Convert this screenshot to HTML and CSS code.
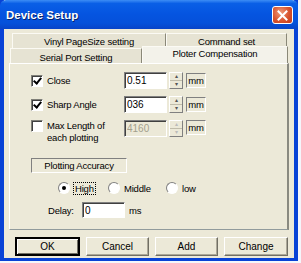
FILE: index.html
```html
<!DOCTYPE html>
<html lang="en">
<head>
  <meta charset="UTF-8" />
  <title>Device Setup</title>
  <link rel="stylesheet" href="styles.css">
</head>
<body>
  <div class="window">
    <!-- Barra de título -->
    <div class="titlebar">
      <span class="title">Device Setup</span>
      <button class="close-btn">
        <svg width="11" height="11" viewBox="0 0 11 11">
          <path d="M1.5 1.5 L9.5 9.5 M9.5 1.5 L1.5 9.5" stroke="#fff" stroke-width="2" stroke-linecap="square" />
        </svg>
      </button>
    </div>

    <div class="content">
      <!-- Pestañas (dos filas) -->
      <div class="tabs">
        <div class="tab-row back">
          <div class="tab tab-vinyl">Vinyl PageSize setting</div>
          <div class="tab tab-command">Command set</div>
        </div>
        <div class="tab-row front">
          <div class="tab tab-serial">Serial Port Setting</div>
          <div class="tab tab-ploter active">Ploter Compensation</div>
        </div>
      </div>

      <!-- Panel de la pestaña activa -->
      <div class="panel">
        <div class="field">
          <label class="check"><span class="box checked"></span><span>Close</span></label>
          <div class="spin">
            <input class="num" value="0.51">
            <div class="arrows"><span>&#9652;</span><span>&#9662;</span></div>
          </div>
          <span class="unit">mm</span>
        </div>

        <div class="field">
          <label class="check"><span class="box checked"></span><span>Sharp Angle</span></label>
          <div class="spin">
            <input class="num" value="036">
            <div class="arrows"><span>&#9652;</span><span>&#9662;</span></div>
          </div>
          <span class="unit">mm</span>
        </div>

        <div class="field tall">
          <label class="check top"><span class="box"></span><span>Max Length of<br>each plotting</span></label>
          <div class="spin disabled">
            <input class="num" value="4160" disabled>
            <div class="arrows"><span>&#9652;</span><span>&#9662;</span></div>
          </div>
          <span class="unit">mm</span>
        </div>

        <div class="group-label">Plotting Accuracy</div>

        <div class="radios">
          <label class="radio r-high"><span class="dot on"></span><span class="focus">High</span></label>
          <label class="radio r-middle"><span class="dot"></span><span>Middle</span></label>
          <label class="radio"><span class="dot"></span><span>low</span></label>
        </div>

        <div class="delay">
          <span class="delay-label">Delay:</span>
          <input class="num plain" value="0">
          <span class="ms">ms</span>
        </div>
      </div>

      <!-- Botones -->
      <div class="buttons">
        <button class="btn default">OK</button>
        <button class="btn">Cancel</button>
        <button class="btn">Add</button>
        <button class="btn">Change</button>
      </div>
    </div>
  </div>
</body>
</html>
```

FILE: styles.css
```css
/* Reinicio básico */
* {
  margin: 0;
  padding: 0;
  box-sizing: border-box;
}
html, body {
  width: 100%;
  height: 100%;
  overflow: hidden;
  background: #f4f6fb;
  font-family: "Liberation Sans", Arial, sans-serif;
  font-size: 9.5px;
  letter-spacing: -0.2px;
  color: #000;
}

/* Ventana estilo XP */
.window {
  width: 298px;
  height: 261px;
  display: flex;
  flex-direction: column;
  border-left: 4px solid #0842d6;
  border-right: 4px solid #0842d6;
  border-bottom: 3px solid #0842d6;
  background: #ece9d8;
}

.titlebar {
  height: 29px;
  margin: 0 -4px;
  padding: 0 5px 0 6px;
  display: flex;
  align-items: center;
  justify-content: space-between;
  background: linear-gradient(to bottom, #3d8df5 0%, #0a5fe6 12%, #0554e0 50%, #0551da 80%, #0844c8 100%);
  border-radius: 6px 6px 0 0;
}
.title {
  color: #fff;
  font-weight: bold;
  font-size: 11.5px;
  letter-spacing: 0;
  text-shadow: 1px 1px 0 #0a246a;
}
.close-btn {
  width: 21px;
  height: 18px;
  margin-top: 1px;
  border: 1px solid #fff;
  border-radius: 3px;
  background: radial-gradient(circle at 40% 35%, #ee9a7a 0%, #d8532e 55%, #c2391a 100%);
  display: flex;
  align-items: center;
  justify-content: center;
}

.content {
  flex: 1;
  padding: 4px 5px 0 5px;
  display: flex;
  flex-direction: column;
}

/* Pestañas */
.tabs {
  display: flex;
  flex-direction: column;
}
.tab-row {
  display: flex;
  height: 15px;
}
.tab-row.back {
  padding-left: 3px;
  margin-right: 2px;
}
.tab-row.front {
  padding-left: 1px;
  margin-right: 1px;
}
.tab {
  display: flex;
  align-items: center;
  justify-content: center;
  background: #e6e3d3;
  border: 1px solid #fbfaf4;
  border-right: 1px solid #8a8878;
  border-bottom: none;
}
.tab-vinyl { width: 154px; }
.tab-command { flex: 1; }
.tab-serial { width: 132px; padding-top: 2px; }
.tab-ploter { flex: 1; }
.tab.active {
  background: #f3f2ea;
  height: 17px;
  margin-top: -2px;
  position: relative;
  z-index: 1;
  align-items: flex-start;
  padding-top: 1px;
}

/* Panel */
.panel {
  height: 167px;
  border: 1px solid #919b9c;
  border-top-color: #fff;
  border-left-color: #fff;
  border-right: 2px solid #8a8a80;
  background: #ece9d8;
  padding: 8px 0 0 21px;
  display: flex;
  flex-direction: column;
}

.field {
  display: flex;
  align-items: center;
  height: 17px;
  margin-bottom: 7px;
}
.field.tall {
  height: 26px;
  align-items: flex-start;
}
.check {
  width: 93px;
  display: flex;
  align-items: center;
  gap: 4px;
}
.check.top { align-items: flex-start; line-height: 12px; }
.box {
  width: 12px;
  height: 12px;
  flex: none;
  background: #fff;
  border: 1px solid;
  border-color: #7f7f78 #fff #fff #7f7f78;
  box-shadow: inset 1px 1px 0 #404040;
  position: relative;
}
.box.checked::after {
  content: "";
  position: absolute;
  left: 3px;
  top: 0px;
  width: 3px;
  height: 6px;
  border: solid #000;
  border-width: 0 2px 2px 0;
  transform: rotate(40deg);
}

.spin {
  display: flex;
  align-items: stretch;
  height: 17px;
}
.num {
  width: 43px;
  height: 17px;
  font: inherit;
  font-size: 10px;
  padding: 0 2px;
  background: #fff;
  border: 1px solid;
  border-color: #808080 #fff #fff #808080;
  box-shadow: inset 1px 1px 0 #404040;
  outline: none;
}
.spin.disabled .num {
  background: #ece9d8;
  color: #a39f8c;
}
.arrows {
  width: 14px;
  margin-left: 2px;
  display: flex;
  flex-direction: column;
  border: 1px solid;
  border-color: #fff #808080 #808080 #fff;
  background: #ece9d8;
}
.arrows span {
  flex: 1;
  font-size: 6px;
  line-height: 7px;
  text-align: center;
  color: #555;
}
.arrows span + span { border-top: 1px solid #c0bcaa; }
.spin.disabled .arrows span { color: #bbb; }
.unit {
  margin-left: 3px;
  height: 15px;
  width: 20px;
  display: flex;
  align-items: center;
  justify-content: center;
  border: 1px solid;
  border-color: #808080 #fff #fff #808080;
}

.group-label {
  width: 96px;
  height: 15px;
  margin-top: 5px;
  display: flex;
  align-items: center;
  justify-content: center;
  border: 1px solid;
  border-color: #808080 #fff #fff #808080;
}

.radios {
  display: flex;
  margin: 9px 0 0 27px;
}
.radio {
  display: flex;
  align-items: center;
  gap: 4px;
}
.r-high { width: 50px; }
.r-middle { width: 58px; }
.dot {
  width: 12px;
  height: 12px;
  border-radius: 50%;
  background: #fff;
  border: 1px solid;
  border-color: #808080 #fff #fff #808080;
  position: relative;
}
.dot.on::after {
  content: "";
  position: absolute;
  left: 3px;
  top: 3px;
  width: 4px;
  height: 4px;
  border-radius: 50%;
  background: #000;
}
.focus {
  outline: 1px dotted #000;
  padding: 0 1px;
}

.delay {
  display: flex;
  align-items: center;
  margin: 8px 0 0 17px;
}
.delay-label { width: 34px; }
.num.plain { width: 43px; height: 16px; margin-right: 4px; }

/* Botones */
.buttons {
  display: flex;
  gap: 6px;
  padding: 7px 0 0 6px;
}
.btn {
  width: 63px;
  height: 19px;
  font: inherit;
  font-size: 10px;
  background: #ece9d8;
  border: 1px solid;
  border-color: #fff #716f64 #716f64 #fff;
  box-shadow: inset -1px -1px 0 #aca899;
}
.btn.default {
  width: 65px;
  border: 2px solid #000;
  box-shadow: inset 1px 1px 0 #fff, inset -1px -1px 0 #716f64;
}
.btn:last-child { width: 64px; }
```
